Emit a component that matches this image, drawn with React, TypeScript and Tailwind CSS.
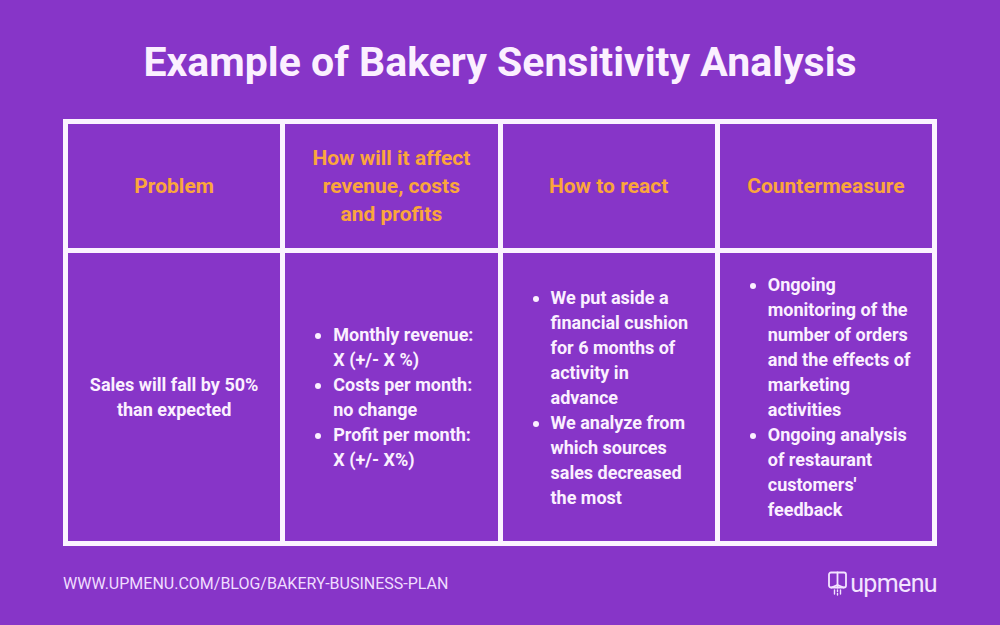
import React from "react";

const headers = [
  "Problem",
  "How will it affect revenue, costs and profits",
  "How to react",
  "Countermeasure",
];

const BulletList = ({ items }: { items: string[] }) => (
  <ul className="list-disc pl-[18px] marker:text-[#fbf0ff]">
    {items.map((item) => (
      <li key={item}>{item}</li>
    ))}
  </ul>
);

const UpmenuLogo = () => (
  <div className="flex items-center gap-[3px] text-[#f3e4ff]">
    <svg width="19" height="25" viewBox="0 0 19 25" fill="none" stroke="currentColor" strokeWidth="1.8" strokeLinecap="round">
      <path d="M3 1.5 h13 a2 2 0 0 1 2 2 v11 a2 2 0 0 1 -2 2 h-13 a2 2 0 0 1 -2 -2 v-11 a2 2 0 0 1 2 -2 z" />
      <path d="M9.5 1.5 v15" />
      <path d="M3.5 16.5 l6 -2.5 l6 2.5" />
      <path d="M6.5 19 v4 M9.5 19 v1.5 M9.5 22.5 v1.5 M12.5 19 v4" strokeWidth="1.4" />
    </svg>
    <span className="text-[25px] leading-none font-normal tracking-tight">upmenu</span>
  </div>
);

export default function App() {
  return (
    <div className="w-[1000px] h-[625px] bg-[#8735c8] flex flex-col font-['Roboto',sans-serif] text-[#fbf0ff]">
      <h1 className="pt-[38px] text-center text-[41px] leading-[48px] font-bold">
        Example of Bakery Sensitivity Analysis
      </h1>

      {/* Table */}
      <div className="mx-[63px] mt-[33px] grid grid-cols-4 grid-rows-[124px_288px] gap-[5px] p-[5px] bg-[#fbf3ff]">
        {headers.map((h) => (
          <div
            key={h}
            className="bg-[#8735c8] flex items-center justify-center px-[22px] text-center text-[21px] leading-[28px] font-bold text-[#fba63b]"
          >
            {h}
          </div>
        ))}

        <div className="bg-[#8735c8] flex items-center justify-center px-[20px] text-center text-[18px] leading-[25px] font-bold">
          Sales will fall by 50% than expected
        </div>
        <div className="bg-[#8735c8] flex items-center pl-[30px] pr-[20px] text-[18px] leading-[25px] font-bold">
          <BulletList
            items={[
              "Monthly revenue: X (+/- X %)",
              "Costs per month: no change",
              "Profit per month: X (+/- X%)",
            ]}
          />
        </div>
        <div className="bg-[#8735c8] flex items-center pl-[30px] pr-[20px] text-[18px] leading-[25px] font-bold">
          <BulletList
            items={[
              "We put aside a financial cushion for 6 months of activity in advance",
              "We analyze from which sources sales decreased the most",
            ]}
          />
        </div>
        <div className="bg-[#8735c8] flex items-center pl-[30px] pr-[20px] text-[18px] leading-[25px] font-bold">
          <BulletList
            items={[
              "Ongoing monitoring of the number of orders and the effects of marketing activities",
              "Ongoing analysis of restaurant customers' feedback",
            ]}
          />
        </div>
      </div>

      {/* Footer */}
      <div className="mx-[63px] mt-[25px] flex items-center justify-between">
        <span className="text-[16px] leading-[20px] text-[#f0ddff]">
          WWW.UPMENU.COM/BLOG/BAKERY-BUSINESS-PLAN
        </span>
        <UpmenuLogo />
      </div>
    </div>
  );
}
